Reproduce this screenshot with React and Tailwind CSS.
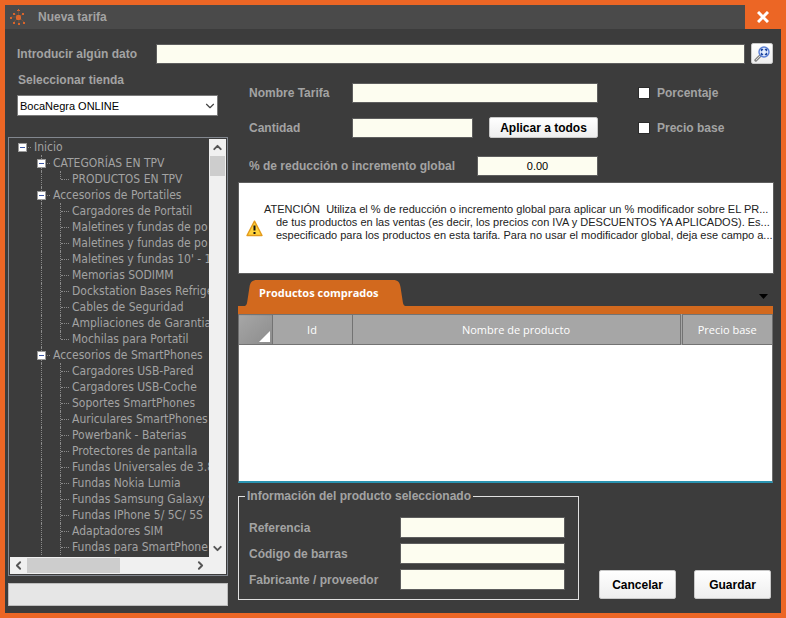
import { useState } from "react";
import { ChevronDown, ChevronUp, ChevronLeft, ChevronRight } from "lucide-react";

const tree = [
    { name: "CATEGORÍAS EN TPV", items: ["PRODUCTOS EN TPV"] },
    {
        name: "Accesorios de Portatiles",
        items: [
            "Cargadores de Portatil",
            "Maletines y fundas de po",
            "Maletines y fundas de po",
            "Maletines y fundas 10' - 1",
            "Memorias SODIMM",
            "Dockstation Bases Refrige",
            "Cables de Seguridad",
            "Ampliaciones de Garantia",
            "Mochilas para Portatil",
        ],
    },
    {
        name: "Accesorios de SmartPhones",
        open: true,
        items: [
            "Cargadores USB-Pared",
            "Cargadores USB-Coche",
            "Soportes SmartPhones",
            "Auriculares SmartPhones",
            "Powerbank - Baterias",
            "Protectores de pantalla",
            "Fundas Universales de 3.8",
            "Fundas Nokia Lumia",
            "Fundas Samsung Galaxy S",
            "Fundas IPhone 5/ 5C/ 5S",
            "Adaptadores SIM",
            "Fundas para SmartPhone",
        ],
    },
];

const field = "border border-[#5e5e5e] bg-[#fdfdf0] px-1 text-[11px] text-black outline-none";
const button = "rounded-[2px] border border-[#c8c8c8] bg-linear-to-b from-white to-[#eeeeee] font-bold text-[12px] text-black cursor-pointer";

function Toggle({ label }) {
    return (
        <button aria-label={label} className="relative flex size-[9px] shrink-0 items-center justify-center border border-[#9a9a9a] bg-white">
            <span className="h-px w-[5px] bg-[#3a55a4]"></span>
        </button>
    );
}

function TreeBranch({ name, items, open }) {
    return (
        <li>
            <div className="relative flex h-4 items-center pl-7">
                <span className="absolute left-8 top-0 h-4 border-l border-dotted border-[#8a8a8a]"></span>
                <Toggle label={name} />
                <span className="mr-[3px] ml-px w-[3px] border-t border-dotted border-[#8a8a8a]"></span>
                <span className="text-nowrap">{name}</span>
            </div>
            <ul>
                {items.map((item, i) => (
                    <li key={i} className="flex h-4 items-center pl-8">
                        <span className="h-4 w-[19px] shrink-0 border-l border-dotted border-[#8a8a8a]"></span>
                        <span className={i === items.length - 1 && !open ? "h-2 self-start border-l border-dotted border-[#8a8a8a]" : "h-4 border-l border-dotted border-[#8a8a8a]"}></span>
                        <span className="mr-[3px] w-2 shrink-0 border-t border-dotted border-[#8a8a8a]"></span>
                        <span className="text-nowrap">{item}</span>
                    </li>
                ))}
            </ul>
        </li>
    );
}

function Tree() {
    return (
        <div className="mt-[21px] border border-[#82878f] p-px font-['DejaVu_Sans_Condensed','DejaVu_Sans',sans-serif] text-[12px]/4">
            <div className="flex">
                <ul className="min-w-0 flex-1 overflow-hidden pb-0.5 -ml-px">
                    <li className="flex h-4 items-center pl-[9px]">
                        <Toggle label="Inicio" />
                        <span className="mr-[3px] ml-px w-[3px] border-t border-dotted border-[#8a8a8a]"></span>
                        <span>Inicio</span>
                    </li>
                    <li>
                        <ul>
                            {tree.map((branch) => <TreeBranch key={branch.name} {...branch} />)}
                        </ul>
                    </li>
                </ul>
                <div className="flex w-[17px] flex-col items-center bg-[#f0f0f0] text-[#555555]">
                    <button aria-label="Subir" className="flex h-[17px] items-center"><ChevronUp size={13} strokeWidth={3.5} /></button>
                    <div className="h-5 w-[15px] bg-[#cdcdcd]"></div>
                    <button aria-label="Bajar" className="mt-auto flex h-[17px] items-center"><ChevronDown size={13} strokeWidth={3.5} /></button>
                </div>
            </div>
            <div className="flex h-[17px] items-center bg-[#f0f0f0] pr-[17px] text-[#555555]">
                <button aria-label="Izquierda" className="flex w-[17px] justify-center"><ChevronLeft size={13} strokeWidth={3.5} /></button>
                <div className="h-[15px] w-[93px] bg-[#cdcdcd]"></div>
                <button aria-label="Derecha" className="ml-auto flex w-[17px] justify-center"><ChevronRight size={13} strokeWidth={3.5} /></button>
            </div>
        </div>
    );
}

function Check({ id, label }) {
    return (
        <div className="flex items-center gap-[7px]">
            <input id={id} type="checkbox" className="size-3 appearance-none border border-[#2c2c2c] bg-white checked:bg-[#ec6625]" />
            <label htmlFor={id}>{label}</label>
        </div>
    );
}

function InfoField({ id, label }) {
    return (
        <div className="flex h-[21px] items-center">
            <label htmlFor={id} className="w-[151px]">{label}</label>
            <input id={id} type="text" className={`h-[21px] w-[165px] ${field}`} />
        </div>
    );
}

export default function App() {
    const [amount, setAmount] = useState("0.00");
    return (
        <main className="flex min-h-screen flex-col border-5 border-[#ec6625] bg-[#3c3c3c] font-['Liberation_Sans',Arial,sans-serif] text-[12px]/4 font-bold text-[#a3a3a3]">
            <header className="flex h-6 items-center bg-[#4a4a4a] pl-[5px]">
                <svg width="16" height="16" viewBox="0 0 16 16" fill="#d9652b" stroke="#d9652b">
                    <path d="M8.500 8V1M8.500 8L4 4M8.500 8L13 5M8.500 8L1 8M8.500 8L4 13M8.500 8L9 15M8.500 8L14 13" strokeWidth="0.5" opacity="0.6" />
                    <rect x="6" y="6" width="5" height="5" rx="1.5" stroke="none" />
                    <path d="M8 0h1v1h1v1h-3v-1h1zM3 4h2v2h-2zM12 4h2v2h-2zM0 8h2v2h-2zM3 13h2v2h-2zM8 14h2v2h-2zM13 13h2v2h-2z" stroke="none" />
                </svg>
                <h1 className="ml-3">Nueva tarifa</h1>
                <button aria-label="Cerrar" className="ml-auto flex h-6 w-9 items-center justify-center bg-[#ec6625] text-white">
                    <svg width="12" height="12" viewBox="0 0 12 12" fill="none" stroke="currentColor" strokeWidth="3">
                        <path d="M1 1L11 11M11 1L1 11" />
                    </svg>
                </button>
            </header>

            <div className="mt-3.5 flex items-center pr-2 pl-3">
                <label htmlFor="search" className="w-[139px]">Introducir algún dato</label>
                <input id="search" type="text" className={`h-5 min-w-0 flex-1 ${field}`} />
                <button aria-label="Buscar" className={`ml-1.5 flex h-[21px] w-[22px] items-center justify-center ${button}`}>
                    <svg width="16" height="16" viewBox="0 0 16 16" fill="none">
                        <path d="M6 10L1.800 14.200" stroke="#858585" strokeWidth="3" strokeLinecap="round" />
                        <path d="M6 10L2 14" stroke="#d6d6d6" strokeWidth="1" />
                        <circle cx="10" cy="6" r="5" fill="#e6f0ff" stroke="#5a7fd6" strokeWidth="1.4" />
                        <path d="M7.500 5.200V3.500H9.200M10.800 3.500H12.500V5.200M12.500 6.800V8.500H10.800M9.200 8.500H7.500V6.800" stroke="#1d459f" strokeWidth="1.4" />
                    </svg>
                </button>
            </div>

            <div className="grid flex-1 grid-cols-[220px_minmax(0,1fr)] gap-2.5 pr-[7px] pb-[7px] pl-[3px]">
                <section className="flex flex-col pt-2">
                    <label htmlFor="store" className="pl-2.5">Seleccionar tienda</label>
                    <div className="relative mt-[7px] mr-2.5 ml-[9px]">
                        <select id="store" className="block h-[21px] w-full appearance-none border border-[#7a7a7a] bg-white px-0.5 text-[11px] font-normal text-black">
                            <option>BocaNegra ONLINE</option>
                        </select>
                        <ChevronDown size={14} className="pointer-events-none absolute top-1 right-px text-[#444444]" />
                    </div>
                    <div className="font-normal"><Tree /></div>
                    <div className="mt-[7px] h-[23px] border border-[#bcbcbc] bg-[#e6e6e6]"></div>
                </section>

                <section className="flex flex-col pt-[19px] pb-1.5">
                    <div className="grid grid-cols-[360px_1fr] pl-[11px]">
                        <div className="flex h-5 items-center">
                            <label htmlFor="name" className="w-[103px]">Nombre Tarifa</label>
                            <input id="name" type="text" className={`h-5 w-[246px] ${field}`} />
                        </div>
                        <div className="flex items-center pl-[29px]"><Check id="percent" label="Porcentaje" /></div>
                        <div className="mt-3.5 flex h-[21px] items-center">
                            <label htmlFor="quantity" className="w-[103px]">Cantidad</label>
                            <input id="quantity" type="text" className={`h-5 w-[121px] ${field}`} />
                            <button className={`ml-4 h-[21px] w-[109px] ${button}`}>Aplicar a todos</button>
                        </div>
                        <div className="mt-3.5 flex items-center pl-[29px]"><Check id="base" label="Precio base" /></div>
                        <div className="mt-[18px] flex h-5 items-center">
                            <label htmlFor="global" className="w-[228px]">% de reducción o incremento global</label>
                            <input id="global" type="text" value={amount} onChange={(e) => setAmount(e.target.value)} className={`h-5 w-[121px] text-center font-normal ${field}`} />
                        </div>
                    </div>

                    <div className="mt-1.5 flex h-[92px] items-center border border-[#5e5e5e] bg-white pl-[7px] text-[11px]/[13px] font-normal text-[#222222]">
                        <svg width="17" height="17" viewBox="0 0 17 17" className="shrink-0">
                            <path d="M8.500 1.200L16 15.500H1Z" fill="#ffd33c" stroke="#e39a1c" strokeWidth="1.4" strokeLinejoin="round" />
                            <path d="M8.500 5.500V10.500M8.500 12V14" stroke="#111111" strokeWidth="2" />
                        </svg>
                        <div className="mb-3 ml-px text-nowrap">
                            <p>ATENCIÓN&nbsp; Utiliza el % de reducción o incremento global para aplicar un % modificador sobre EL PR...</p>
                            <p className="pl-3">de tus productos en las ventas (es decir, los precios con IVA y DESCUENTOS YA APLICADOS). Es...</p>
                            <p className="pl-3">especificado para los productos en esta tarifa. Para no usar el modificador global, deja ese campo a...</p>
                        </div>
                    </div>

                    <div className="mt-1.5 mr-px flex items-end justify-between border-b-8 border-[#d2691e] pr-[5px] pl-[7px] font-['Open_Sans',sans-serif]">
                        <button className="relative h-[26px] w-[160px] pl-3.5 text-left text-[11px] font-bold text-white">
                            <svg width="160" height="26" viewBox="0 0 160 26" className="absolute inset-0" fill="#d2691e">
                                <path d="M0 26C2 25 2 23 2.500 20L4.500 7C5.200 2.500 7 0 12 0H148C153 0 154.800 2.500 155.500 7L157.500 20C158 23 158 25 160 26Z" />
                            </svg>
                            <span className="relative">Productos comprados</span>
                        </button>
                        <button aria-label="Más pestañas" className="mb-[7px]">
                            <svg width="9" height="5" viewBox="0 0 9 5" className="block"><path d="M0 0H9L4.500 5Z" fill="#000000" /></svg>
                        </button>
                    </div>
                    <div className="mr-px flex-1 border-x border-b-2 border-x-[#6e6e6e] border-b-[#2a93b0] bg-white">
                        <table className="w-full table-fixed border-collapse bg-[#a6a6a6] font-['Open_Sans',sans-serif] text-[11px] text-white">
                            <thead>
                                <tr className="h-[30px] border-y border-[#737373]">
                                    <th className="w-[33px] border-r border-[#737373] bg-linear-to-br from-[#a6a6a6] to-[#8c8c8c] p-0">
                                        <svg width="11" height="11" viewBox="0 0 11 11" className="mt-3.5 ml-5"><path d="M11 0V11H0Z" fill="#ffffff" /></svg>
                                    </th>
                                    <th className="w-20 border-r border-[#737373] p-0 font-normal">Id</th>
                                    <th className="border-r-3 border-double border-[#737373] p-0 font-normal">Nombre de producto</th>
                                    <th className="w-[91px] p-0 font-normal">Precio base</th>
                                </tr>
                            </thead>
                        </table>
                    </div>

                    <div className="mt-1.5 flex items-end pr-[3px]">
                        <fieldset className="w-[341px] border border-[#e0e0e0] pt-3.5 pb-[9px] pl-2.5">
                            <legend className="-ml-1 px-0.5 text-[12px]/[14px]">Información del producto seleccionado</legend>
                            <div className="flex flex-col gap-[5px]">
                                <InfoField id="reference" label="Referencia" />
                                <InfoField id="barcode" label="Código de barras" />
                                <InfoField id="maker" label="Fabricante / proveedor" />
                            </div>
                        </fieldset>
                        <div className="mb-px ml-auto flex gap-[18px]">
                            <button className={`h-[29px] w-[77px] ${button}`}>Cancelar</button>
                            <button className={`h-[29px] w-[77px] ${button}`}>Guardar</button>
                        </div>
                    </div>
                </section>
            </div>
        </main>
    );
}
